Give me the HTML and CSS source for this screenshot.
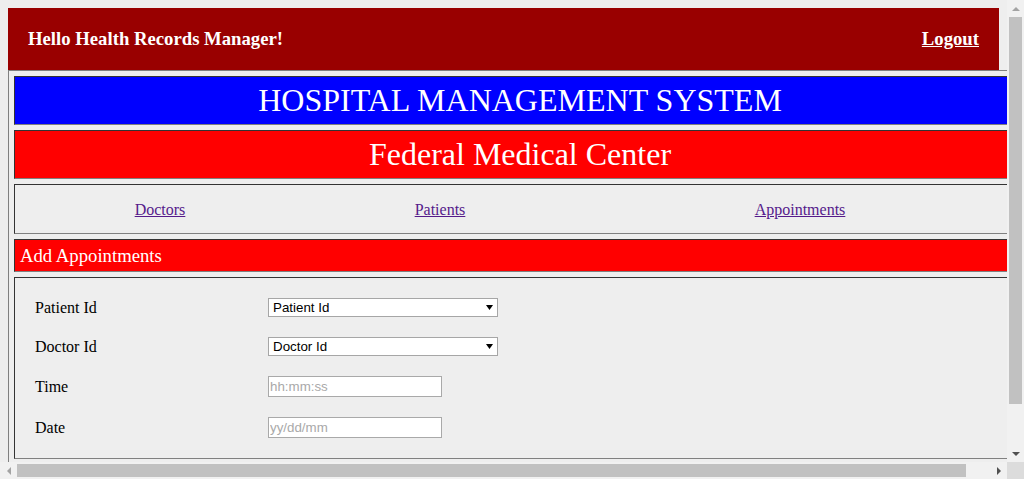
FILE: index.html
```html
<!DOCTYPE html>
<html>
<head>
<meta charset="utf-8">
<title>Hospital Management System</title>
<link rel="stylesheet" href="styles.css">
</head>
<body>
<div class="window">
  <div class="viewport">
    <div class="page">
      <header class="topbar">
        <h3 class="greeting">Hello Health Records Manager!</h3>
        <a class="logout" href="#">Logout</a>
      </header>
      <div class="frame">
        <div class="box title-box">HOSPITAL MANAGEMENT SYSTEM</div>
        <div class="box center-box">Federal Medical Center</div>
        <nav class="box nav-box">
          <div class="nav-cell"><a href="#">Doctors</a></div>
          <div class="nav-cell"><a href="#">Patients</a></div>
          <div class="nav-cell"><a href="#">Appointments</a></div>
        </nav>
        <div class="box section-box">Add Appointments</div>
        <form class="box form-box">
          <div class="row">
            <label class="label">Patient Id</label>
            <div class="select-wrap">
              <select class="select"><option>Patient Id</option></select>
              <svg class="arrow" width="7" height="5" viewBox="0 0 7 5"><path d="M0 0H7L3.5 5Z" fill="#000"/></svg>
            </div>
          </div>
          <div class="row">
            <label class="label">Doctor Id</label>
            <div class="select-wrap">
              <select class="select"><option>Doctor Id</option></select>
              <svg class="arrow" width="7" height="5" viewBox="0 0 7 5"><path d="M0 0H7L3.5 5Z" fill="#000"/></svg>
            </div>
          </div>
          <div class="row">
            <label class="label">Time</label>
            <input class="input" type="text" placeholder="hh:mm:ss">
          </div>
          <div class="row">
            <label class="label">Date</label>
            <input class="input" type="text" placeholder="yy/dd/mm">
          </div>
        </form>
      </div>
    </div>
  </div>
  <div class="vbar">
    <div class="sb-btn"><svg width="8" height="4" viewBox="0 0 8 4"><path d="M0 4L4 0L8 4Z" fill="#a3a3a3"/></svg></div>
    <div class="vtrack"><div class="vthumb"></div></div>
    <div class="sb-btn"><svg width="8" height="4" viewBox="0 0 8 4"><path d="M0 0H8L4 4Z" fill="#505050"/></svg></div>
  </div>
  <div class="hbar">
    <div class="sb-btn"><svg width="4" height="8" viewBox="0 0 4 8"><path d="M4 0V8L0 4Z" fill="#a3a3a3"/></svg></div>
    <div class="htrack"><div class="hthumb"></div></div>
    <div class="sb-btn"><svg width="4" height="8" viewBox="0 0 4 8"><path d="M0 0V8L4 4Z" fill="#505050"/></svg></div>
  </div>
  <div class="corner"></div>
</div>
</body>
</html>
```
FILE: styles.css
```css
html,
body {
  margin: 0;
  padding: 0;
  overflow: hidden;
  background: #eeeeee;
}
body {
  font-family: "Liberation Serif", "Times New Roman", serif;
  font-size: 16px;
  color: #000;
}
.window {
  display: grid;
  grid-template-columns: 1007px 17px;
  grid-template-rows: 462px 17px;
  width: 1024px;
  height: 479px;
}
.viewport {
  overflow: hidden;
  background: #eeeeee;
}
.page {
  padding: 8px;
}
.topbar {
  height: 62px;
  background: #990000;
  display: flex;
  align-items: center;
  justify-content: space-between;
  padding: 0 20px;
  box-sizing: border-box;
}
.greeting {
  margin: 0;
  font-size: 18.72px;
  font-weight: bold;
  color: #fff;
}
.logout {
  font-size: 18.72px;
  font-weight: bold;
  color: #fff;
}
.frame {
  width: 1012px;
  padding: 5px 5px 44px;
  border: 1px solid;
  border-color: #808080 #404040 #404040 #808080;
  display: flex;
  flex-direction: column;
  gap: 5px;
}
.box {
  border: 1px solid;
  border-color: #333333 #808080 #808080 #333333;
  padding: 5px;
}
.title-box,
.center-box {
  font-size: 32px;
  line-height: 37px;
  color: #fff;
  text-align: center;
}
.title-box {
  background: #0000ff;
}
.center-box {
  background: #ff0000;
}
.nav-box {
  display: grid;
  grid-template-columns: 28fr 28fr 44fr;
  padding: 16px 5px 14px;
  line-height: 18px;
}
.nav-cell {
  text-align: center;
}
.nav-cell a {
  color: #551a8b;
}
.section-box {
  background: #ff0000;
  color: #fff;
  font-size: 18.72px;
  line-height: 21px;
}
.form-box {
  margin: 0;
  padding: 10px 5px 10px 20px;
}
.row {
  display: flex;
  align-items: center;
  padding: 10px 0;
}
.label {
  width: 233px;
  flex: none;
}
.select-wrap {
  position: relative;
  width: 230px;
  height: 19px;
}
.select {
  appearance: none;
  -webkit-appearance: none;
  display: block;
  width: 230px;
  height: 19px;
  margin: 0;
  padding: 0 0 0 4px;
  border: 1px solid #a6a6a6;
  border-radius: 0;
  background: #fff;
  font-family: "Liberation Sans", Arial, sans-serif;
  font-size: 13.33px;
  color: #000;
  box-sizing: border-box;
}
.arrow {
  position: absolute;
  right: 5px;
  top: 7px;
  pointer-events: none;
}
.input {
  width: 174px;
  height: 21px;
  margin: 0;
  padding: 0 1px;
  border: 1px solid #a9a9a9;
  border-radius: 0;
  background: #fff;
  font-family: "Liberation Sans", Arial, sans-serif;
  font-size: 13.33px;
  box-sizing: border-box;
}
.input::placeholder {
  color: #a9a9a9;
}

/* scrollbars */
.vbar {
  display: flex;
  flex-direction: column;
  background: #f1f1f1;
}
.hbar {
  display: flex;
  background: #f1f1f1;
}
.sb-btn {
  width: 17px;
  height: 17px;
  flex: none;
  display: flex;
  align-items: center;
  justify-content: center;
}
.vtrack {
  flex: 1;
  padding: 0 2px;
}
.vthumb {
  height: 387px;
  background: #c1c1c1;
}
.htrack {
  flex: 1;
  padding: 2px 0;
}
.hthumb {
  width: 949px;
  height: 13px;
  background: #c1c1c1;
}
.corner {
  background: #dcdcdc;
}
```
